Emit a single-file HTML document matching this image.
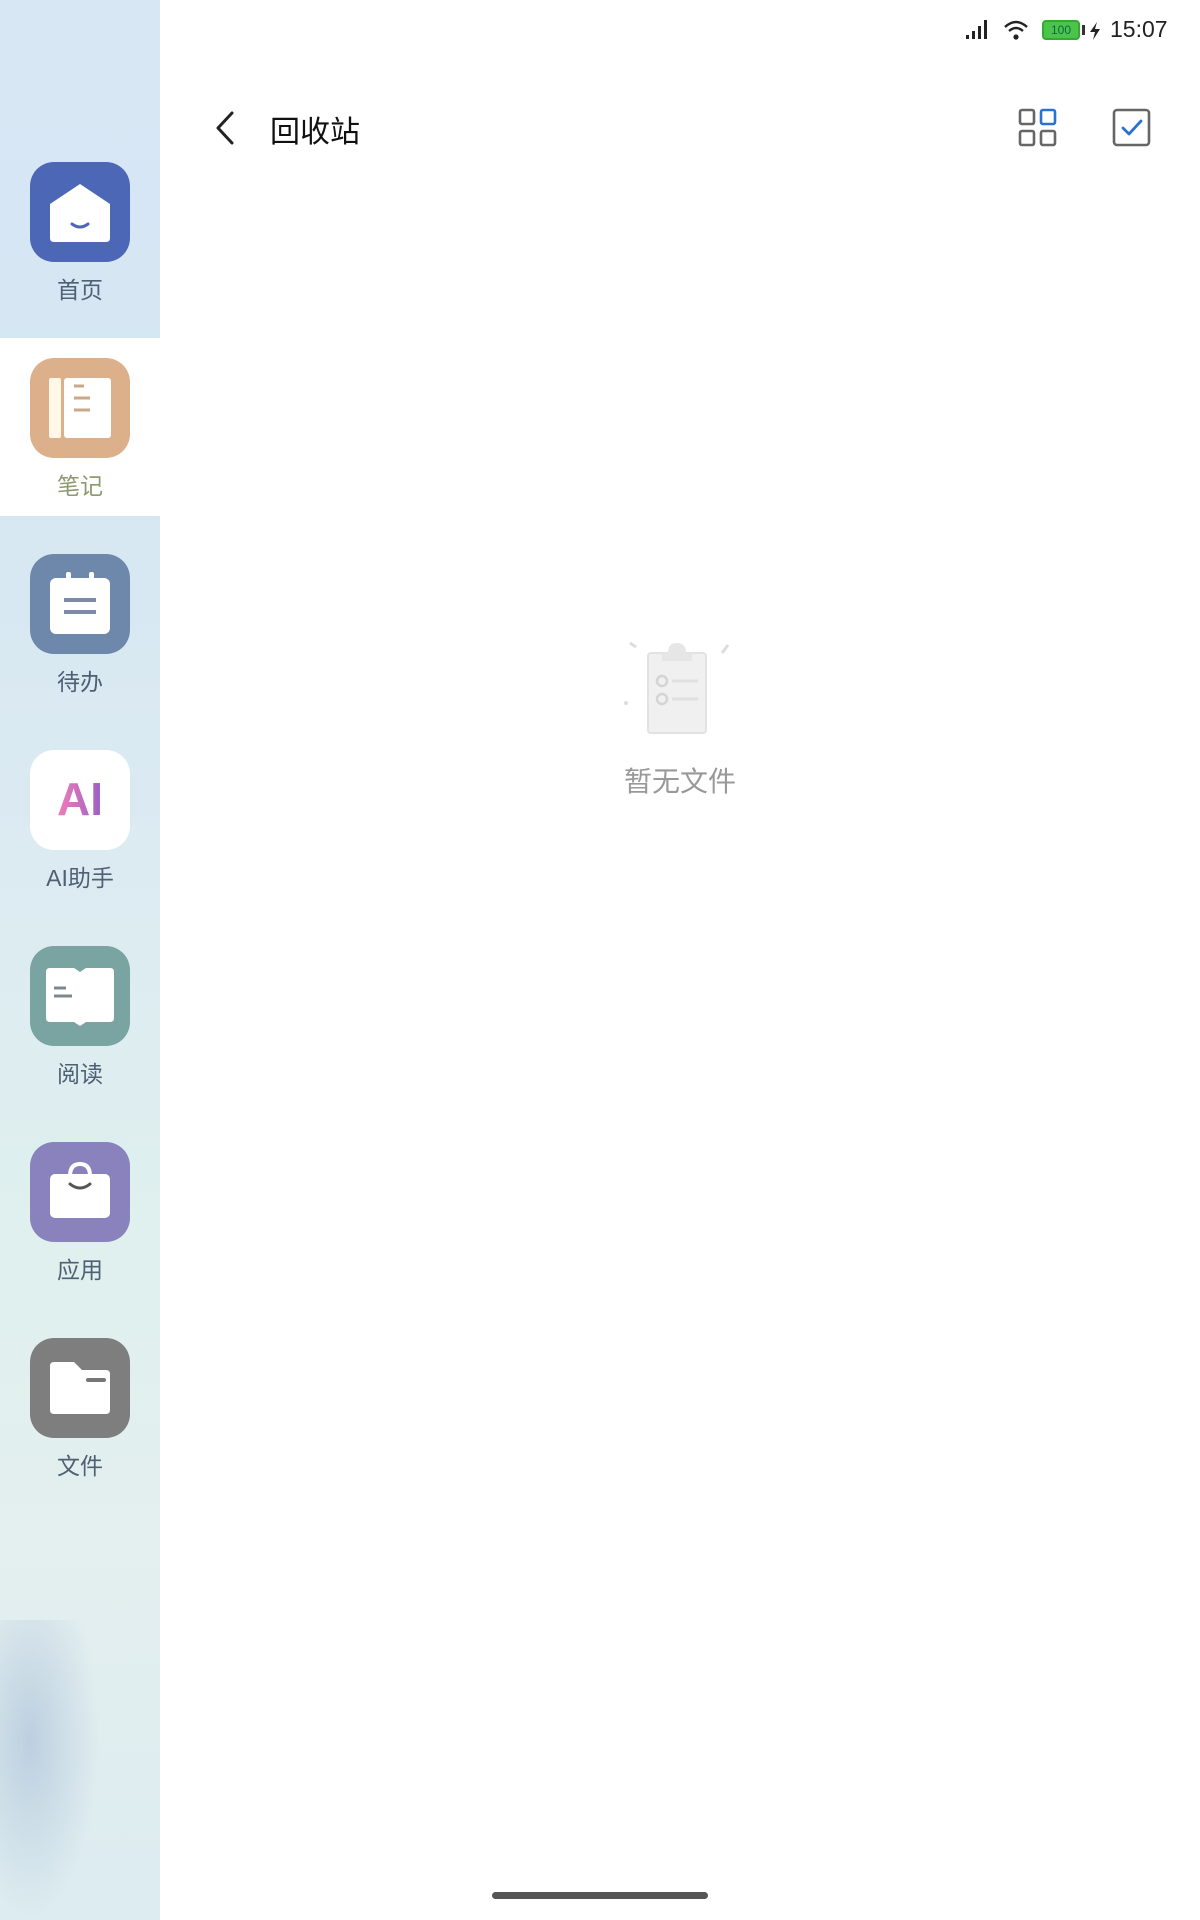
<!DOCTYPE html>
<html><head><meta charset="utf-8">
<style>
*{margin:0;padding:0;box-sizing:border-box}
body{width:1200px;height:1920px;background:#fff;position:relative;overflow:hidden;font-family:"Liberation Sans","Noto Sans CJK SC",sans-serif}
.side{position:absolute;left:0;top:0;width:160px;height:1920px;background:linear-gradient(180deg,#d8e7f4 0%,#d5e6f3 20%,#dcebf2 45%,#dff0ee 65%,#e4efef 80%,#dcecf0 100%)}
.blob{position:absolute;left:0;top:1620px;width:100px;height:300px;background:radial-gradient(ellipse at 30% 40%,rgba(180,200,220,.8),rgba(200,220,235,0) 70%)}
.sel{position:absolute;left:0;top:338px;width:160px;height:178px;background:#fff}
.item{position:absolute;left:30px;width:100px;text-align:center}
.ic{width:100px;height:100px;border-radius:24px;position:relative}
.lb{position:absolute;left:-20px;width:140px;top:109px;font-size:23px;color:#4f6075;text-align:center}
</style></head><body>
<div class="side"><div class="blob"></div></div>
<div class="sel"></div>

<div class="item" style="top:162px"><div class="ic" style="background:#4d67b7">
<svg width="100" height="100" viewBox="0 0 100 100"><path d="M20 42 L50 22 L80 42 V76 Q80 80 76 80 H24 Q20 80 20 76Z" fill="#fff"/><path d="M42 62 Q50 68 58 62" stroke="#4d67b7" stroke-width="3" fill="none" stroke-linecap="round"/></svg>
</div><div class="lb">首页</div></div>

<div class="item" style="top:358px"><div class="ic" style="background:#dbb08b">
<svg width="100" height="100" viewBox="0 0 100 100"><rect x="19" y="20" width="12" height="60" rx="2" fill="#fff8e8"/><rect x="34" y="20" width="47" height="60" rx="3" fill="#fff"/><path d="M44 28h10M44 40h16M44 52h16" stroke="#c8a888" stroke-width="3"/></svg>
</div><div class="lb" style="color:#8c9a70">笔记</div></div>

<div class="item" style="top:554px"><div class="ic" style="background:#6d88ab">
<svg width="100" height="100" viewBox="0 0 100 100"><rect x="20" y="24" width="60" height="56" rx="6" fill="#fff"/><rect x="36" y="18" width="5" height="10" rx="2" fill="#fff"/><rect x="59" y="18" width="5" height="10" rx="2" fill="#fff"/><path d="M34 46h32M34 58h32" stroke="#7d8aa8" stroke-width="4"/></svg>
</div><div class="lb">待办</div></div>

<div class="item" style="top:750px"><div class="ic" style="background:#fff">
<svg width="100" height="100" viewBox="0 0 100 100"><defs><linearGradient id="g" x1="0" x2="1"><stop offset="0" stop-color="#ee7fb8"/><stop offset="1" stop-color="#9b5ec4"/></linearGradient></defs><text x="50" y="65" text-anchor="middle" font-family="Liberation Sans" font-weight="bold" font-size="46" fill="url(#g)">AI</text></svg>
</div><div class="lb">AI助手</div></div>

<div class="item" style="top:946px"><div class="ic" style="background:#7aa4a2">
<svg width="100" height="100" viewBox="0 0 100 100"><path d="M16 26 Q16 22 20 22 H44 L50 26 L56 22 H80 Q84 22 84 26 V72 Q84 76 80 76 H56 L50 80 L44 76 H20 Q16 76 16 72Z" fill="#fff"/><path d="M24 42h12M24 50h18" stroke="#7f8a90" stroke-width="3"/></svg>
</div><div class="lb">阅读</div></div>

<div class="item" style="top:1142px"><div class="ic" style="background:#8a82bc">
<svg width="100" height="100" viewBox="0 0 100 100"><path d="M40 34 Q40 22 50 22 Q60 22 60 34" stroke="#fff" stroke-width="4" fill="none"/><rect x="20" y="32" width="60" height="44" rx="5" fill="#fff"/><path d="M40 42 Q50 50 60 42" stroke="#555" stroke-width="3" fill="none" stroke-linecap="round"/></svg>
</div><div class="lb">应用</div></div>

<div class="item" style="top:1338px"><div class="ic" style="background:#7e7e7e">
<svg width="100" height="100" viewBox="0 0 100 100"><path d="M20 28 Q20 24 24 24 H44 L52 32 H76 Q80 32 80 36 V72 Q80 76 76 76 H24 Q20 76 20 72Z" fill="#fff"/><path d="M58 42h16" stroke="#777" stroke-width="4" stroke-linecap="round"/></svg>
</div><div class="lb">文件</div></div>

<svg style="position:absolute;left:965px;top:18px" width="28" height="22" viewBox="0 0 28 22"><rect x="1" y="17" width="3" height="4" fill="#222"/><rect x="7" y="13" width="3" height="8" fill="#222"/><rect x="13" y="8" width="3" height="13" fill="#222"/><rect x="19" y="2" width="3" height="19" fill="#222"/></svg>
<svg style="position:absolute;left:1003px;top:18px" width="26" height="24" viewBox="0 0 26 24"><path d="M2 9 Q13 -1 24 9" stroke="#222" stroke-width="2.4" fill="none"/><path d="M6 13 Q13 7 20 13" stroke="#222" stroke-width="2.4" fill="none"/><circle cx="13" cy="19" r="2.6" fill="#222"/></svg>
<div style="position:absolute;left:1042px;top:20px;width:38px;height:20px;border:2px solid #3a3;border-radius:4px;background:#4cc44c;font-size:12px;text-align:center;line-height:16px;color:#164">100</div>
<div style="position:absolute;left:1082px;top:25px;width:3px;height:10px;background:#333"></div>
<svg style="position:absolute;left:1089px;top:22px" width="12" height="18" viewBox="0 0 12 18"><path d="M8 0 L1 10 H6 L4 18 L11 7 H6Z" fill="#222"/></svg>
<div style="position:absolute;left:1110px;top:16px;font-size:23px;color:#222">15:07</div>

<svg style="position:absolute;left:210px;top:108px" width="30" height="40" viewBox="0 0 30 40"><path d="M22 5 L8 20 L22 35" stroke="#222" stroke-width="3" fill="none" stroke-linecap="round" stroke-linejoin="round"/></svg>
<div style="position:absolute;left:270px;top:107px;font-size:30px;color:#111">回收站</div>
<svg style="position:absolute;left:1018px;top:108px" width="40" height="40" viewBox="0 0 40 40"><rect x="2" y="2" width="14" height="14" rx="2" stroke="#666" stroke-width="2.6" fill="none"/><rect x="23" y="2" width="14" height="14" rx="2" stroke="#2a72d0" stroke-width="2.6" fill="none"/><rect x="2" y="23" width="14" height="14" rx="2" stroke="#666" stroke-width="2.6" fill="none"/><rect x="23" y="23" width="14" height="14" rx="2" stroke="#666" stroke-width="2.6" fill="none"/></svg>
<svg style="position:absolute;left:1112px;top:108px" width="40" height="40" viewBox="0 0 40 40"><rect x="2" y="2" width="35" height="35" rx="3" stroke="#666" stroke-width="2.6" fill="none"/><path d="M11 20 L17 26 L29 13" stroke="#2a72d0" stroke-width="2.8" fill="none" stroke-linecap="round" stroke-linejoin="round"/></svg>

<svg style="position:absolute;left:620px;top:635px" width="120" height="110" viewBox="0 0 120 110"><rect x="28" y="18" width="58" height="80" rx="3" fill="#f0f0f0" stroke="#e2e2e2" stroke-width="2"/><path d="M48 18 Q48 8 57 8 Q66 8 66 18 H72 V26 H42 V18Z" fill="#e6e6e6"/><circle cx="42" cy="46" r="5" fill="none" stroke="#d4d4d4" stroke-width="2.5"/><circle cx="42" cy="64" r="5" fill="none" stroke="#d4d4d4" stroke-width="2.5"/><path d="M52 46h26M52 64h26" stroke="#e0e0e0" stroke-width="3"/><path d="M10 8 l6 4" stroke="#ddd" stroke-width="3"/><path d="M108 10 l-6 8" stroke="#ddd" stroke-width="3"/><circle cx="6" cy="68" r="2" fill="#ddd"/></svg>
<div style="position:absolute;left:560px;top:760px;width:240px;text-align:center;font-size:28px;color:#999">暂无文件</div>

<div style="position:absolute;left:492px;top:1892px;width:216px;height:7px;border-radius:4px;background:#555"></div>
</body></html>
